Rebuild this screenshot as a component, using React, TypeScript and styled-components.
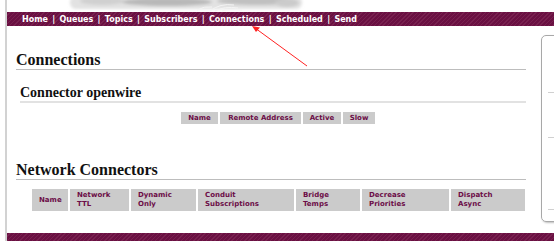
import styled, { createGlobalStyle } from "styled-components";

const GlobalStyle = createGlobalStyle`
  html, body {
    margin: 0;
    padding: 0;
    background: #fff;
  }
`;

const navLinks = ["Home", "Queues", "Topics", "Subscribers", "Connections", "Scheduled", "Send"];

const connectorCols = [
  { label: "Name", width: 37 },
  { label: "Remote Address", width: 81 },
  { label: "Active", width: 38 },
  { label: "Slow", width: 32 },
];

const networkCols = [
  { label: ["Name"], width: 36 },
  { label: ["Network", "TTL"], width: 59 },
  { label: ["Dynamic", "Only"], width: 65 },
  { label: ["Conduit", "Subscriptions"], width: 96 },
  { label: ["Bridge", "Temps"], width: 64 },
  { label: ["Decrease", "Priorities"], width: 87 },
  { label: ["Dispatch", "Async"], width: 74 },
];

function App() {
  return (
    <Page>
      <GlobalStyle />
      <Frame>
        <LogoBar>
          <Logo />
        </LogoBar>
        <NavBar>
          {navLinks.map((l, i) => (
            <span key={l}>
              {i > 0 && <Sep>|</Sep>}
              <NavLink>{l}</NavLink>
            </span>
          ))}
        </NavBar>
        <Body>
          <Content>
            <Title>Connections</Title>
            <SubTitle>Connector openwire</SubTitle>
            <CenterWrap>
              <Grid>
                <thead>
                  <tr>
                    {connectorCols.map((c) => (
                      <HeadCell key={c.label} $w={c.width}>
                        {c.label}
                      </HeadCell>
                    ))}
                  </tr>
                </thead>
              </Grid>
            </CenterWrap>
            <Title $top={37}>Network Connectors</Title>
            <WideGrid>
              <thead>
                <tr>
                  {networkCols.map((c) => (
                    <TallCell key={c.label.join(" ")} $w={c.width}>
                      {c.label.map((t, i) => (
                        <span key={t}>
                          {i > 0 && <br />}
                          {t}
                        </span>
                      ))}
                    </TallCell>
                  ))}
                </tr>
              </thead>
            </WideGrid>
          </Content>
          <Sidebar>
            <SideRule $top={55} />
            <SideRule $top={44} />
            <SideRule $top={71} />
          </Sidebar>
        </Body>
        <Footer />
      </Frame>
      <Arrow />
    </Page>
  );
}

// faded banner image above the menu
function Logo() {
  return (
    <svg width="250" height="12" viewBox="0 0 250 12">
      <defs>
        <filter id="soft" filterUnits="userSpaceOnUse" x="-20" y="-20" width="290" height="50">
          <feGaussianBlur stdDeviation="1.6" />
        </filter>
      </defs>
      <g filter="url(#soft)">
        <rect x="8" y="-4" width="232" height="13" rx="6" fill="#e2e2e2" />
        <ellipse cx="40" cy="1" rx="22" ry="4" fill="#d0d0d0" />
        <ellipse cx="105" cy="2" rx="45" ry="4" fill="#b8b8b8" />
        <ellipse cx="195" cy="1" rx="40" ry="4" fill="#c0c0c0" />
        <ellipse cx="225" cy="3" rx="12" ry="4" fill="#cbcbcb" />
      </g>
      <path
        d="M148 11 Q158 3 172 5 M153 11 Q162 6 176 8 M160 11 Q168 8 180 10 M135 10 Q142 6 150 7"
        stroke="#f4f4f4"
        strokeWidth="1"
        fill="none"
      />
    </svg>
  );
}

function Arrow() {
  return (
    <ArrowSvg width="554" height="241" viewBox="0 0 554 241">
      <line x1="307" y1="66" x2="255" y2="28" stroke="#f22" strokeWidth="1" />
      <polygon points="252,26 260,27.5 256,32" fill="#f22" />
    </ArrowSvg>
  );
}

export default App;

const Page = styled.div`
  position: relative;
  width: 554px;
  height: 241px;
  overflow: hidden;
  background: #fff;
`;

const Frame = styled.div`
  margin-left: 5px;
  border-left: 2px solid #d2d2d2;
  display: flex;
  flex-direction: column;
`;

const LogoBar = styled.div`
  height: 12px;
  padding-left: 55px;
  overflow: hidden;
  svg {
    display: block;
  }
`;

const stripes = `repeating-linear-gradient(
  135deg,
  #6a1042 0px,
  #6a1042 2px,
  #78214f 2px,
  #78214f 3px
)`;

const NavBar = styled.div`
  height: 14px;
  background: ${stripes};
  padding-left: 15px;
  display: flex;
  align-items: center;
  font-family: "DejaVu Sans", Verdana, sans-serif;
  font-weight: bold;
  font-size: 8px;
  color: #fff;
  white-space: nowrap;
`;

const NavLink = styled.span`
  color: #fff;
`;

const Sep = styled.span`
  margin: 0 4.3px;
`;

const Body = styled.div`
  height: 207px;
  display: flex;
`;

const Content = styled.div`
  width: 534px;
  flex: none;
  padding-left: 9px;
  box-sizing: border-box;
`;

const Title = styled.h2<{ $top?: number }>`
  width: 510px;
  margin: ${(p) => p.$top ?? 25}px 0 0;
  font-family: "Liberation Serif", "Times New Roman", serif;
  font-weight: bold;
  font-size: 16px;
  line-height: 18px;
  color: #111;
  border-bottom: 1px solid #bdbdbd;
`;

const SubTitle = styled.h3`
  width: 506px;
  margin: 15px 0 0 4px;
  font-family: "Liberation Serif", "Times New Roman", serif;
  font-weight: bold;
  font-size: 14px;
  line-height: 16px;
  color: #111;
  border-bottom: 2px solid #e2e2e2;
`;

const CenterWrap = styled.div`
  width: 510px;
  padding-left: 14px;
  box-sizing: border-box;
  display: flex;
  justify-content: center;
  margin-top: 9px;
`;

const Grid = styled.table`
  border-collapse: separate;
  border-spacing: 2px 0;
`;

const HeadCell = styled.th<{ $w: number }>`
  width: ${(p) => p.$w}px;
  box-sizing: border-box;
  height: 12px;
  padding: 0;
  background: #cbcbcb;
  color: #6c0d47;
  font-family: "DejaVu Sans", Verdana, sans-serif;
  font-weight: bold;
  font-size: 7px;
  line-height: 8px;
  text-align: center;
  white-space: nowrap;
`;

const WideGrid = styled.table`
  border-collapse: separate;
  border-spacing: 2px 0;
  table-layout: fixed;
  margin: 9px 0 0 14px;
`;

const TallCell = styled.th<{ $w: number }>`
  width: ${(p) => p.$w}px;
  box-sizing: border-box;
  height: 22px;
  padding: 0 0 0 7px;
  background: #cbcbcb;
  color: #6c0d47;
  font-family: "DejaVu Sans", Verdana, sans-serif;
  font-weight: bold;
  font-size: 7px;
  line-height: 9px;
  text-align: left;
  vertical-align: middle;
  white-space: nowrap;
`;

const Sidebar = styled.div`
  margin: 9px 0 0 0;
  width: 40px;
  height: 187px;
  flex: none;
  border: 1px solid #a8a8a8;
  border-radius: 5px;
  box-shadow: 1px 1px 2px rgba(0, 0, 0, 0.25);
  padding-top: 1px;
  box-sizing: border-box;
`;

const SideRule = styled.div<{ $top: number }>`
  margin: ${(p) => p.$top}px 0 0 6px;
  height: 1px;
  background: #d0d0d0;
`;

const Footer = styled.div`
  height: 20px;
  background: ${stripes};
`;

const ArrowSvg = styled.svg`
  position: absolute;
  left: 0;
  top: 0;
  pointer-events: none;
`;
